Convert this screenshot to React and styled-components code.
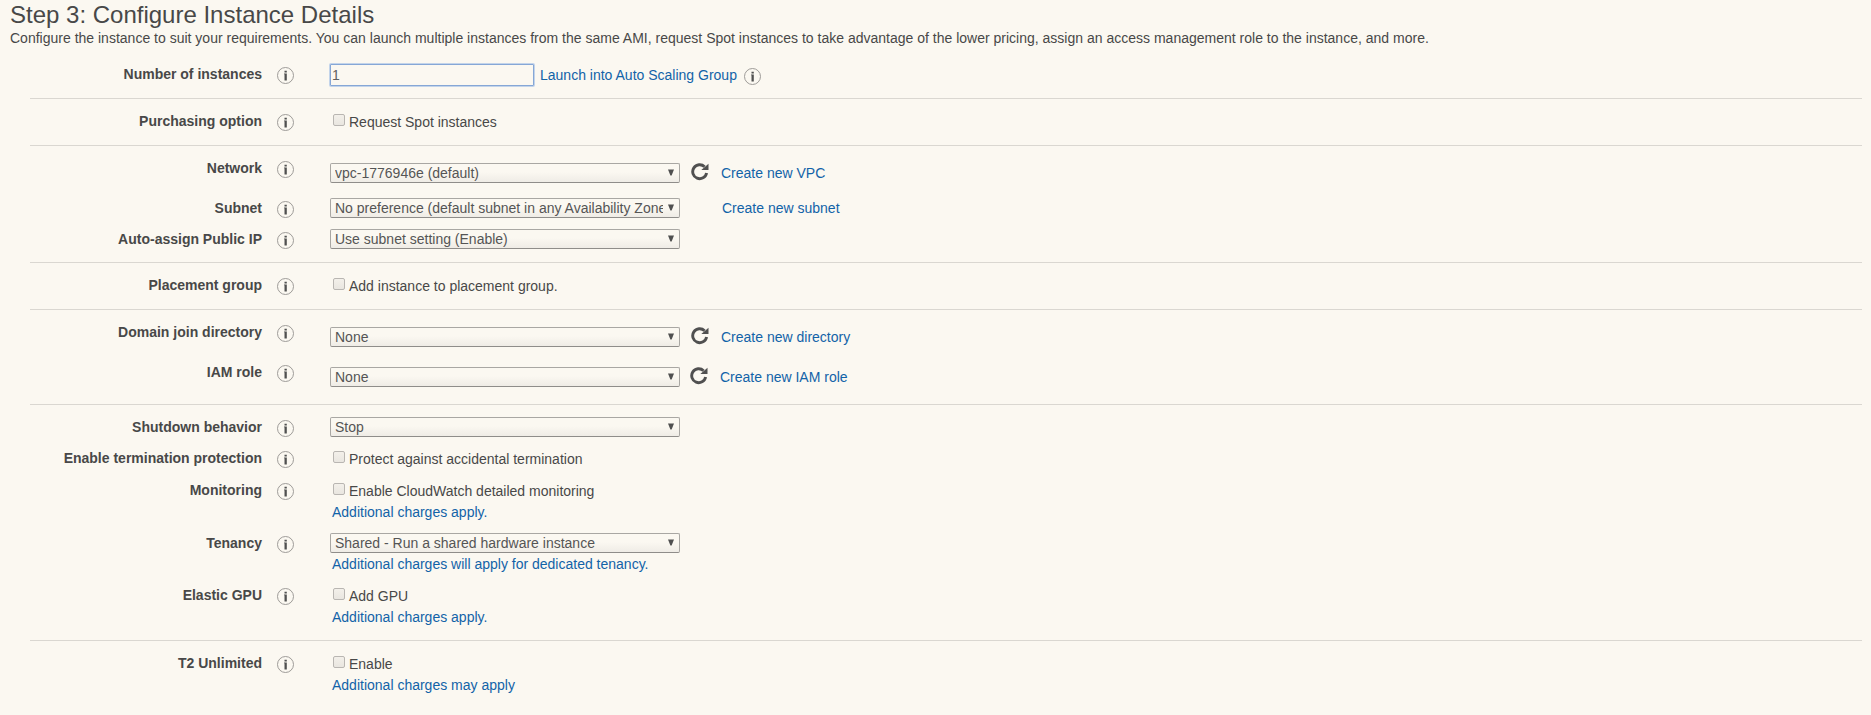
import React from "react";
import styled, { createGlobalStyle } from "styled-components";

const GlobalStyle = createGlobalStyle`
  *, *::before, *::after { box-sizing: border-box; }
  body {
    margin: 0;
    background: #fbf8f1;
    color: #484848;
    font-family: "Liberation Sans", Arial, sans-serif;
    font-size: 14px;
    line-height: 20px;
  }
`;

const Page = styled.main`
  height: 715px;
  padding: 0 9px 0 10px;
  overflow: hidden;
`;

const Title = styled.h1`
  margin: 0;
  height: 28px;
  font-size: 24px;
  font-weight: 400;
  line-height: 30px;
`;

const Description = styled.p`
  margin: 0;
  white-space: nowrap;
  letter-spacing: 0.004px;
`;

const Form = styled.form`
  margin: 16px 0 0 20px;
`;

const Section = styled.section`
  padding-top: 12px;
  border-top: 1px solid #dad7d1;

  &:first-child {
    padding-top: 0;
    border-top: 0;
  }
`;

const Row = styled.div`
  display: flex;
  align-items: flex-start;
  height: ${({ $height }) => $height}px;
`;

const Label = styled.div`
  width: 232px;
  text-align: right;
  font-weight: 700;
`;

const InfoSlot = styled.div`
  display: flex;
  width: 68px;
  padding: 3px 0 0 15px;
`;

const Field = styled.div`
  display: flex;
  flex-direction: column;
  padding-top: ${({ $drop = 0 }) => $drop}px;
`;

const Line = styled.div`
  display: flex;
  align-items: flex-start;
  white-space: nowrap;
`;

const Link = styled.a`
  color: #1263a8;
  text-decoration: none;
  white-space: nowrap;
  margin-left: ${({ $gap = 0 }) => $gap}px;
`;

const Note = styled(Link)`
  margin-left: 2px;
  margin-top: ${({ $gap = 0 }) => $gap}px;
`;

const NumberInput = styled.input`
  width: 204px;
  height: 22px;
  margin: 0;
  padding: 0 0 0 1px;
  border: 1px solid #86a7d6;
  border-radius: 1px;
  outline: 0;
  box-shadow: 0 0 0 1px #c3d4ea;
  background: #fbf8f1;
  color: #606060;
  font: 14px "Liberation Sans", Arial, sans-serif;
`;

const SelectBox = styled.div`
  display: flex;
  align-items: center;
  width: 350px;
  height: 20px;
  padding: 0 5px 0 4px;
  border: 1px solid #a9a7a3;
  border-bottom-color: #8f8d8a;
  border-radius: 2px;
  background: linear-gradient(#fbf8f1 45%, #efece6);
  color: #555;
`;

const SelectText = styled.span`
  width: 328px;
  overflow: hidden;
  white-space: nowrap;
  line-height: 18px;
`;

const Arrow = styled.svg`
  width: 6px;
  height: 7px;
  margin: 0 0 1px 5px;
  flex: none;
`;

const Checkbox = styled.span`
  width: 12px;
  height: 12px;
  margin: 3px 4px 0 3px;
  border: 1px solid #b9b6b2;
  border-radius: 2px;
  background: linear-gradient(#f3f0ea, #e9e6e0);
`;

const CheckText = styled.span`
  padding-top: 1px;
`;

const InfoSvg = styled.svg`
  width: 17px;
  height: 17px;
  flex: none;
`;

const ReloadSvg = styled.svg`
  width: 18px;
  height: 18px;
  margin-left: ${({ $gap }) => $gap}px;
  flex: none;
`;

const LaunchInfo = styled.span`
  display: flex;
  padding: 4px 0 0 7px;
`;

const LaunchLink = styled(Link)`
  padding-top: 1px;
`;

function Info() {
  return (
    <InfoSvg viewBox="0 0 17 17">
      <circle cx="8.5" cy="8.5" r="8" fill="none" stroke="#94928f" strokeWidth="0.9" />
      <path d="M7.5 3.7h2.3v1.8H7.5zM7 6.4h2.8v7.2H7.5V7.2H7z" fill="#505050" />
    </InfoSvg>
  );
}

function Reload({ gap }) {
  return (
    <ReloadSvg viewBox="0 0 18 18" $gap={gap}>
      <path d="M13.6 3.7A7 7 0 1 0 15.6 10" fill="none" stroke="#505050" strokeWidth="2.9" />
      <path d="M17.5 0.8v6.3h-7.2z" fill="#505050" />
    </ReloadSvg>
  );
}

function Select({ children }) {
  return (
    <SelectBox>
      <SelectText>{children}</SelectText>
      <Arrow viewBox="0 0 6 7">
        <path d="M0 .5h6L3.6 6.5H2.4z" fill="#505050" />
      </Arrow>
    </SelectBox>
  );
}

function Check({ children }) {
  return (
    <Line>
      <Checkbox role="checkbox" aria-checked="false" />
      <CheckText>{children}</CheckText>
    </Line>
  );
}

function Option({ label, height, drop, children }) {
  return (
    <Row $height={height}>
      <Label>{label}</Label>
      <InfoSlot>
        <Info />
      </InfoSlot>
      <Field $drop={drop}>{children}</Field>
    </Row>
  );
}

export default function App() {
  return (
    <Page>
      <GlobalStyle />
      <Title>Step 3: Configure Instance Details</Title>
      <Description>
        Configure the instance to suit your requirements. You can launch multiple instances from the same AMI, request Spot instances to take advantage of the lower pricing, assign an access management role to the instance, and more.
      </Description>
      <Form>
        <Section>
          <Option label="Number of instances" height={34}>
            <Line>
              <NumberInput defaultValue="1" />
              <LaunchLink $gap={6}>Launch into Auto Scaling Group</LaunchLink>
              <LaunchInfo>
                <Info />
              </LaunchInfo>
            </Line>
          </Option>
        </Section>
        <Section>
          <Option label="Purchasing option" height={34}>
            <Check>Request Spot instances</Check>
          </Option>
        </Section>
        <Section>
          <Option label="Network" height={40} drop={5}>
            <Line>
              <Select>vpc-1776946e (default)</Select>
              <Reload gap={11} />
              <Link $gap={12}>Create new VPC</Link>
            </Line>
          </Option>
          <Option label="Subnet" height={31}>
            <Line>
              <Select>No preference (default subnet in any Availability Zone)</Select>
              <Link $gap={42}>Create new subnet</Link>
            </Line>
          </Option>
          <Option label="Auto-assign Public IP" height={33}>
            <Select>Use subnet setting (Enable)</Select>
          </Option>
        </Section>
        <Section>
          <Option label="Placement group" height={34}>
            <Check>Add instance to placement group.</Check>
          </Option>
        </Section>
        <Section>
          <Option label="Domain join directory" height={40} drop={5}>
            <Line>
              <Select>None</Select>
              <Reload gap={11} />
              <Link $gap={12}>Create new directory</Link>
            </Line>
          </Option>
          <Option label="IAM role" height={42} drop={5}>
            <Line>
              <Select>None</Select>
              <Reload gap={10} />
              <Link $gap={12}>Create new IAM role</Link>
            </Line>
          </Option>
        </Section>
        <Section>
          <Option label="Shutdown behavior" height={31}>
            <Select>Stop</Select>
          </Option>
          <Option label="Enable termination protection" height={32}>
            <Check>Protect against accidental termination</Check>
          </Option>
          <Option label="Monitoring" height={53}>
            <Check>Enable CloudWatch detailed monitoring</Check>
            <Note $gap={1}>Additional charges apply.</Note>
          </Option>
          <Option label="Tenancy" height={52}>
            <Select>Shared - Run a shared hardware instance</Select>
            <Note $gap={1}>Additional charges will apply for dedicated tenancy.</Note>
          </Option>
          <Option label="Elastic GPU" height={55}>
            <Check>Add GPU</Check>
            <Note $gap={1}>Additional charges apply.</Note>
          </Option>
        </Section>
        <Section>
          <Option label="T2 Unlimited" height={55}>
            <Check>Enable</Check>
            <Note $gap={1}>Additional charges may apply</Note>
          </Option>
        </Section>
      </Form>
    </Page>
  );
}
